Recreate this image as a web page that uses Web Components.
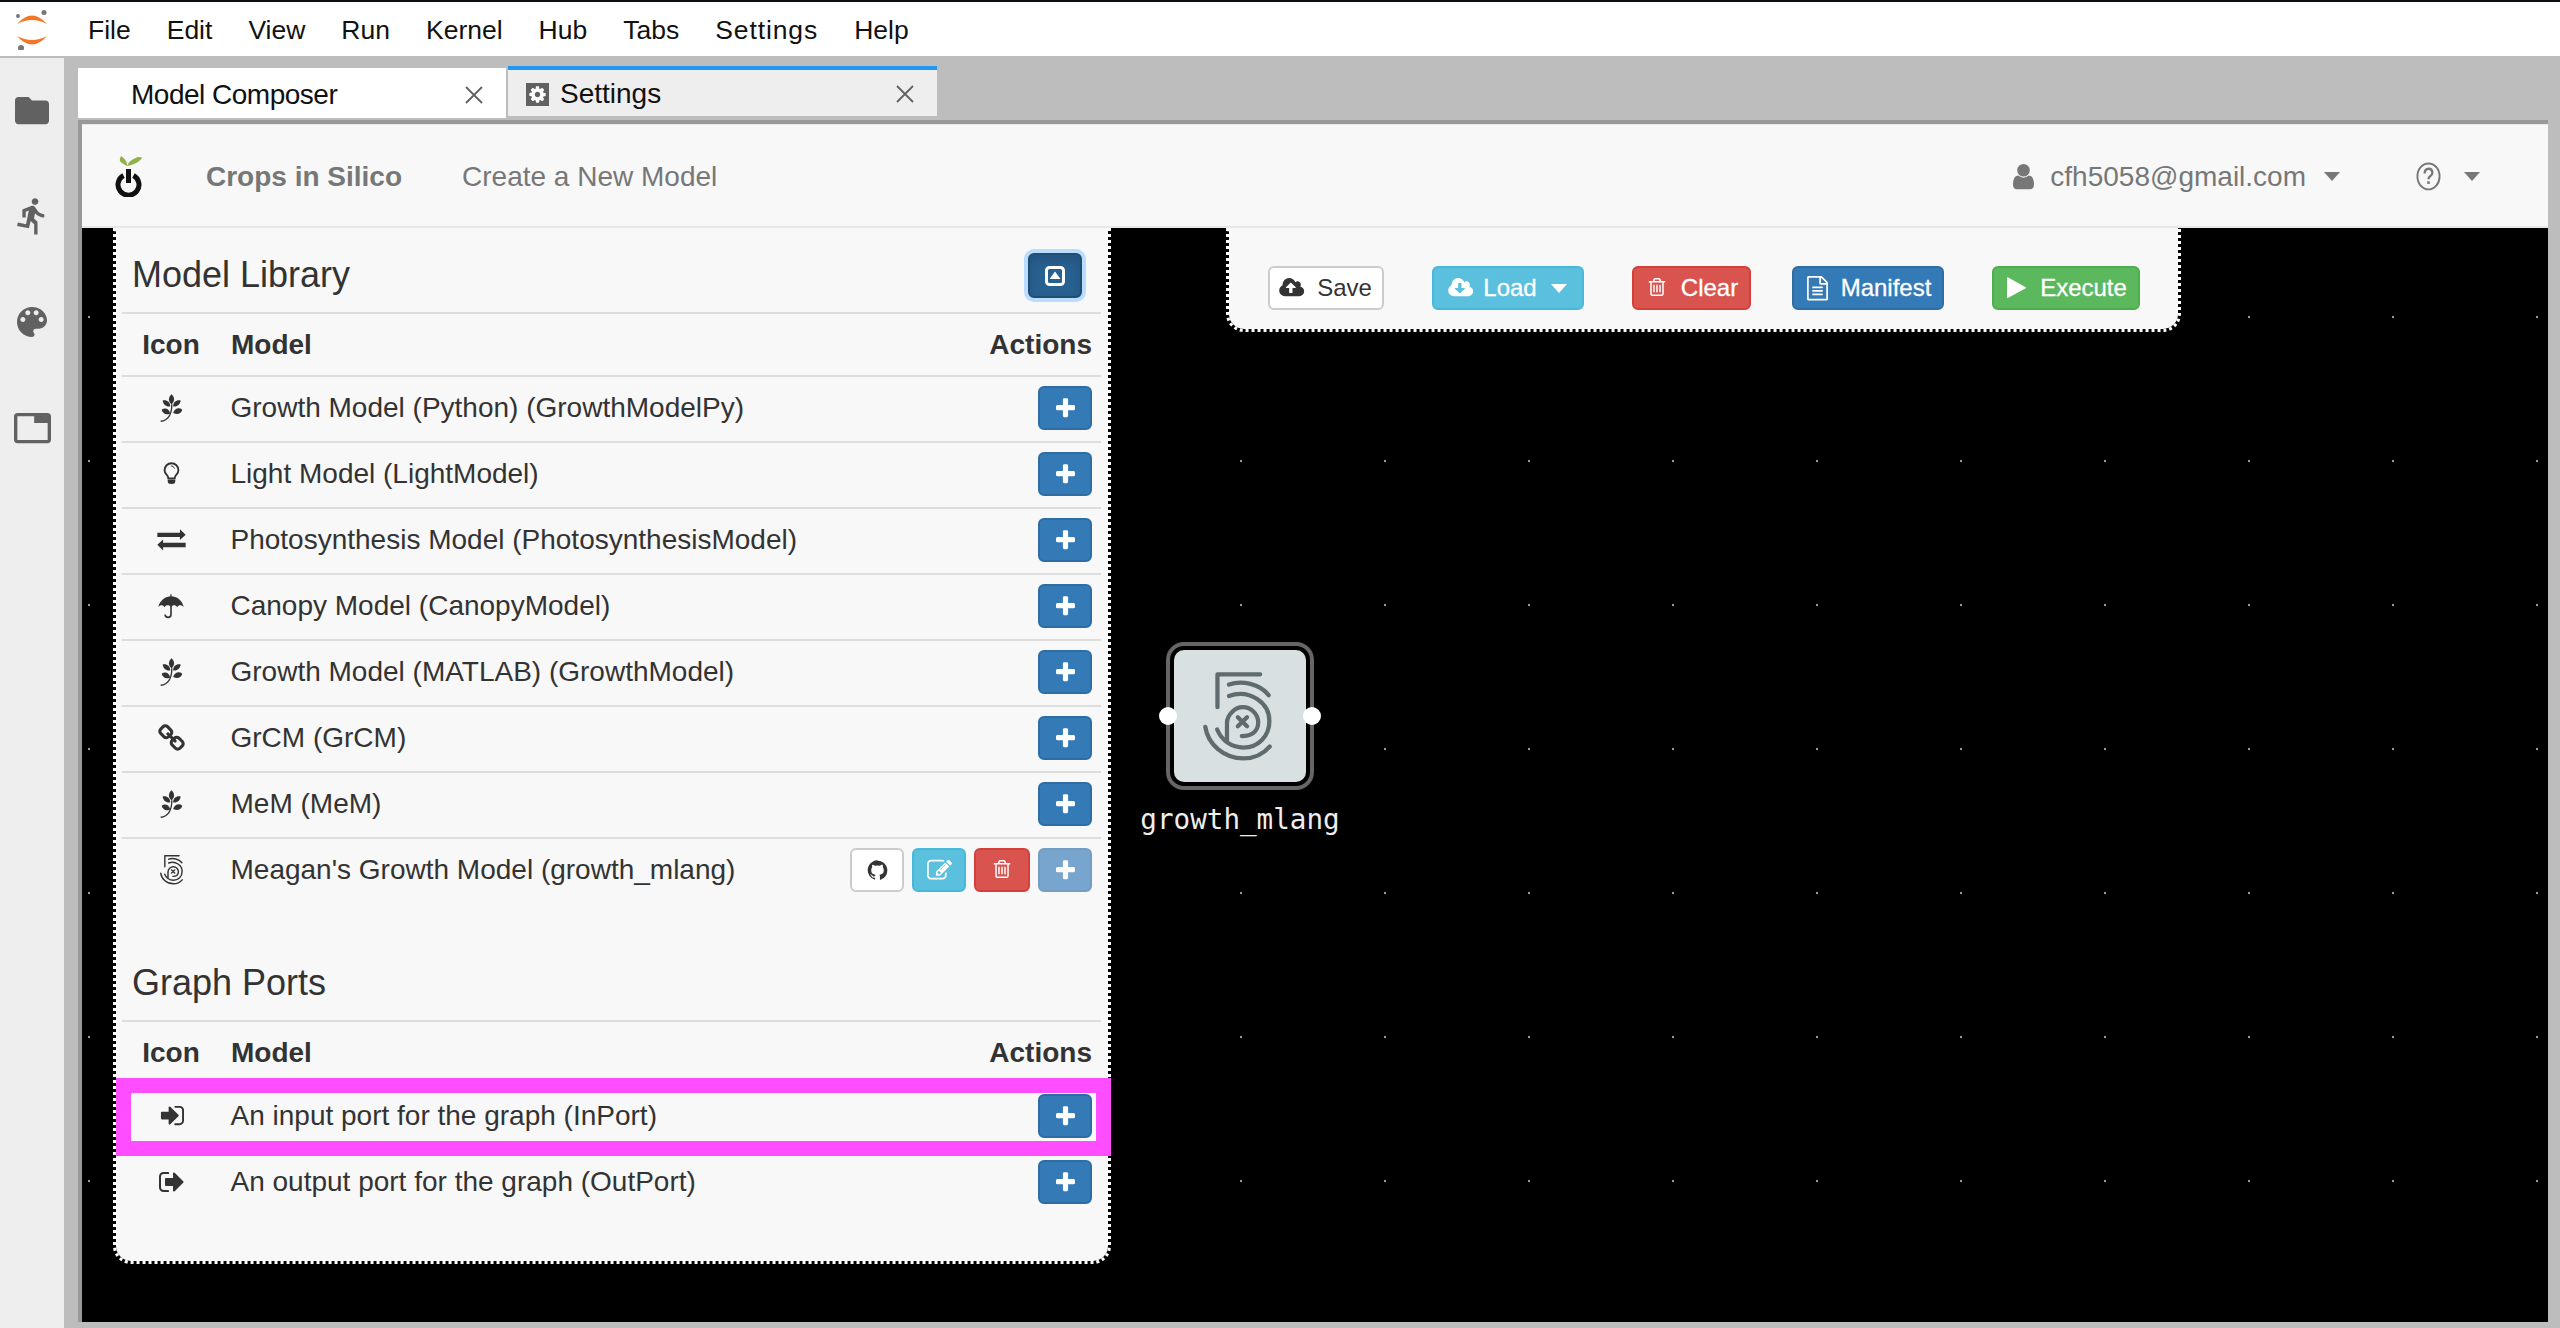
<!DOCTYPE html>
<html>
<head>
<meta charset="utf-8">
<title>Model Composer</title>
<style>
  html, body { margin: 0; height: 100%; overflow: hidden; }
  body { font-family: "Liberation Sans", Arial, sans-serif; color: #333; }
</style>
</head>
<body>
<jl-app>
  <jl-menubar slot="menu"></jl-menubar>
  <jl-sidebar slot="side"></jl-sidebar>
  <jl-tab slot="tabs" label="Model Composer" width="428" style="letter-spacing:-.5px"></jl-tab>
  <jl-tab slot="tabs" label="Settings" width="429" accent></jl-tab>

  <cis-navbar slot="doc"></cis-navbar>
  <cis-canvas slot="doc">
    <cis-panel style="left:31px;top:0;width:998px;height:1036px">
      <cis-section heading="Model Library">
        <cis-btn slot="head-action" kind="toggle" icon="caret-square" icon-size="20" style="width:54px"></cis-btn>
        <cis-row><x-icon slot="icon" name="grain" size="23"></x-icon>Growth Model (Python) (GrowthModelPy)<cis-btn slot="actions" kind="primary" icon="plus" icon-size="19"></cis-btn></cis-row>
        <cis-row><x-icon slot="icon" name="bulb" size="17"></x-icon>Light Model (LightModel)<cis-btn slot="actions" kind="primary" icon="plus" icon-size="19"></cis-btn></cis-row>
        <cis-row><x-icon slot="icon" name="exchange" size="29"></x-icon>Photosynthesis Model (PhotosynthesisModel)<cis-btn slot="actions" kind="primary" icon="plus" icon-size="19"></cis-btn></cis-row>
        <cis-row><x-icon slot="icon" name="umbrella" size="28"></x-icon>Canopy Model (CanopyModel)<cis-btn slot="actions" kind="primary" icon="plus" icon-size="19"></cis-btn></cis-row>
        <cis-row><x-icon slot="icon" name="grain" size="23"></x-icon>Growth Model (MATLAB) (GrowthModel)<cis-btn slot="actions" kind="primary" icon="plus" icon-size="19"></cis-btn></cis-row>
        <cis-row><x-icon slot="icon" name="link" size="27"></x-icon>GrCM (GrCM)<cis-btn slot="actions" kind="primary" icon="plus" icon-size="19"></cis-btn></cis-row>
        <cis-row><x-icon slot="icon" name="grain" size="23"></x-icon>MeM (MeM)<cis-btn slot="actions" kind="primary" icon="plus" icon-size="19"></cis-btn></cis-row>
        <cis-row><x-icon slot="icon" name="five" size="23"></x-icon>Meagan's Growth Model (growth_mlang)
          <cis-btn slot="actions" kind="default" icon="github" icon-size="23"></cis-btn>
          <cis-btn slot="actions" kind="info" icon="edit" icon-size="25"></cis-btn>
          <cis-btn slot="actions" kind="danger" icon="trash" icon-size="18" style="width:56px"></cis-btn>
          <cis-btn slot="actions" kind="primary" icon="plus" icon-size="19" faded></cis-btn>
        </cis-row>
      </cis-section>
      <cis-section heading="Graph Ports" style="margin-top:33px">
        <cis-row><x-icon slot="icon" name="sign-in" size="25"></x-icon>An input port for the graph (InPort)<cis-btn slot="actions" kind="primary" icon="plus" icon-size="19"></cis-btn></cis-row>
        <cis-row><x-icon slot="icon" name="sign-out" size="25"></x-icon>An output port for the graph (OutPort)<cis-btn slot="actions" kind="primary" icon="plus" icon-size="19"></cis-btn></cis-row>
      </cis-section>
      <cis-highlight style="left:0;top:850px;width:995px;height:78px"></cis-highlight>
    </cis-panel>

    <cis-panel toolbar style="left:1144px;top:0;width:955px;height:104px">
      <cis-btn kind="default" icon="cloud-up" icon-size="25" style="width:116px;gap:12px">Save</cis-btn>
      <cis-btn kind="info" icon="cloud-down" icon-size="25" caret style="width:152px;margin-left:48px;gap:9px">Load</cis-btn>
      <cis-btn kind="danger" icon="trash" icon-size="18" style="width:119px;margin-left:48px;gap:15px;padding-left:3px">Clear</cis-btn>
      <cis-btn kind="primary" icon="file" icon-size="21" style="width:152px;margin-left:41px;gap:13px;padding-left:2px">Manifest</cis-btn>
      <cis-btn kind="success" icon="play" icon-size="19" style="width:148px;margin-left:48px;gap:14px;padding-left:2px">Execute</cis-btn>
    </cis-panel>

    <cis-node label="growth_mlang" style="left:1084px;top:414px"></cis-node>
  </cis-canvas>
</jl-app>

<script>
const FA = '0 0 1792 1792';
const PLAY = 'M1576 927l-1328 738q-23 13-39.5 3t-16.5-36v-1472q0-26 16.5-36t39.5 3l1328 738q23 13 23 31t-23 31z';
const ICONS = {
  plus: { vb: '192 192 1408 1408', d: 'M1600 736v192q0 40-28 68t-68 28h-416v416q0 40-28 68t-68 28h-192q-40 0-68-28t-28-68v-416h-416q-40 0-68-28t-28-68v-192q0-40 28-68t68-28h416v-416q0-40 28-68t68-28h192q40 0 68 28t28 68v416h416q40 0 68 28t28 68z' },
  trash: { vb: '128 128 1536 1664', d: 'M704 736v576q0 14-9 23t-23 9h-64q-14 0-23-9t-9-23v-576q0-14 9-23t23-9h64q14 0 23 9t9 23zm256 0v576q0 14-9 23t-23 9h-64q-14 0-23-9t-9-23v-576q0-14 9-23t23-9h64q14 0 23 9t9 23zm256 0v576q0 14-9 23t-23 9h-64q-14 0-23-9t-9-23v-576q0-14 9-23t23-9h64q14 0 23 9t9 23zm128 724v-948h-896v948q0 22 7 40.5t14.5 27 10.5 8.5h832q3 0 10.5-8.5t14.5-27 7-40.5zm-672-1076h448l-48-117q-7-9-17-11h-317q-10 2-17 11zm928 32v64q0 14-9 23t-23 9h-96v948q0 83-47 143.5t-113 60.5h-832q-66 0-113-58.5t-47-141.5v-952h-96q-14 0-23-9t-9-23v-64q0-14 9-23t23-9h309l70-167q15-37 54-63t79-26h320q40 0 79 26t54 63l70 167h309q14 0 23 9t9 23z' },
  github: { vb: FA, d: 'M896 128q209 0 385.5 103t279.5 279.5 103 385.5q0 251-146.5 451.5t-378.5 277.5q-27 5-40-7t-13-30q0-3 .5-76.5t.5-134.5q0-97-52-142 57-6 102.5-18t94-39 81-66.5 53-105 20.5-150.5q0-119-79-206 37-91-8-204-28-9-81 11t-92 44l-38 24q-93-26-192-26t-192 26q-16-11-42.5-27t-83.5-38.5-85-13.5q-45 113-8 204-79 87-79 206 0 85 20.5 150t52.5 105 80.5 67 94 39 102.5 18q-39 36-49 103-21 10-45 15t-57 5-65.5-21.5-55.5-62.5q-19-32-48.5-52t-49.5-24l-20-3q-21 0-29 4.5t-5 11.5 9 14 13 12l7 5q22 10 43.5 38t31.5 51l10 23q13 38 44 63t67 32 72 8 59-3l21-4q0 30 .5 70t.5 43q0 18-13 30t-40 7q-232-77-378.5-277.5t-146.5-451.5q0-209 103-385.5t279.5-279.5 385.5-103z' },
  edit: { vb: FA, d: 'M888 1184l116-116-152-152-116 116v56h96v96h56zm440-720q-16-16-33 1l-350 350q-17 17-1 33t33-1l350-350q17-17 1-33zm80 594v190q0 119-84.5 203.5t-203.5 84.5h-832q-119 0-203.5-84.5t-84.5-203.5v-832q0-119 84.5-203.5t203.5-84.5h832q63 0 117 25 15 7 18 23 3 17-9 29l-49 49q-14 14-32 8-23-6-45-6h-832q-66 0-113 47t-47 113v832q0 66 47 113t113 47h832q66 0 113-47t47-113v-126q0-13 9-22l64-64q15-15 35-7t20 29zm-96-738l288 288-672 672h-288v-288zm444 132l-92 92-288-288 92-92q28-28 68-28t68 28l152 152q28 28 28 68t-28 68z' },
  'cloud-up': { vb: '0 128 1920 1536', d: 'M1216 864q0-14-9-23l-352-352q-9-9-23-9t-23 9l-351 351q-10 12-10 24 0 14 9 23t23 9h224v352q0 13 9.5 22.5t22.5 9.5h192q13 0 22.5-9.5t9.5-22.5v-352h224q13 0 22.5-9.5t9.5-22.5zm640 288q0 159-112.5 271.5t-271.5 112.5h-1088q-185 0-316.5-131.5t-131.5-316.5q0-130 70-240t188-165q-2-30-2-43 0-212 150-362t362-150q156 0 285.5 87t188.5 231q71-62 166-62 106 0 181 75t75 181q0 76-41 138 130 31 213.5 135.5t83.5 238.5z' },
  'cloud-down': { vb: '0 128 1920 1536', d: 'M1216 928q0-14-9-23t-23-9h-224v-352q0-13-9.5-22.5t-22.5-9.5h-192q-13 0-22.5 9.5t-9.5 22.5v352h-224q-14 0-23 9t-9 23q0 12 10 24l351 351q9 9 23 9t23-9l352-352q9-9 9-23zm640 224q0 159-112.5 271.5t-271.5 112.5h-1088q-185 0-316.5-131.5t-131.5-316.5q0-130 70-240t188-165q-2-30-2-43 0-212 150-362t362-150q156 0 285.5 87t188.5 231q71-62 166-62 106 0 181 75t75 181q0 76-41 138 130 31 213.5 135.5t83.5 238.5z' },
  file: { vb: '128 0 1536 1792', d: 'M1596 380q28 28 48 76t20 88v1152q0 40-28 68t-68 28h-1344q-40 0-68-28t-28-68v-1600q0-40 28-68t68-28h896q40 0 88 20t76 48zm-444-244v376h376q-10-29-22-41l-313-313q-12-12-41-22zm384 1528v-1024h-416q-40 0-68-28t-28-68v-416h-768v1536h1280zm-1024-864q0-14 9-23t23-9h704q14 0 23 9t9 23v64q0 14-9 23t-23 9h-704q-14 0-23-9t-9-23v-64zm736 224q14 0 23 9t9 23v64q0 14-9 23t-23 9h-704q-14 0-23-9t-9-23v-64q0-14 9-23t23-9h704zm0 256q14 0 23 9t9 23v64q0 14-9 23t-23 9h-704q-14 0-23-9t-9-23v-64q0-14 9-23t23-9h704z' },
  play: { vb: '190 100 1410 1600', d: PLAY },
  user: { vb: '256 128 1280 1536', d: 'M1536 1399q0 109-62.5 187t-150.5 78h-854q-88 0-150.5-78t-62.5-187q0-85 8.5-160.5t31.5-152 58.5-131 94-89 134.5-34.5q131 128 313 128t313-128q76 0 134.5 34.5t94 89 58.5 131 31.5 152 8.5 160.5zm-256-887q0 159-112.5 271.5t-271.5 112.5-271.5-112.5-112.5-271.5 112.5-271.5 271.5-112.5 271.5 112.5 112.5 271.5z' },
  gear: { vb: FA, d: 'M1152 896q0-106-75-181t-181-75-181 75-75 181 75 181 181 75 181-75 75-181zm512-109v222q0 12-8 23t-20 13l-185 28q-19 54-39 91 35 50 107 138 10 12 10 25t-9 23q-27 37-99 108t-94 71q-12 0-26-9l-138-108q-44 23-91 38-16 136-29 186-7 28-36 28h-222q-14 0-24.5-8.5t-11.5-21.5l-28-184q-49-16-90-37l-141 107q-10 9-25 9-14 0-25-11-126-114-165-168-7-10-7-23 0-12 8-23 15-21 51-66.5t54-70.5q-27-50-41-99l-183-27q-13-2-21-12.5t-8-23.5v-222q0-12 8-23t19-13l186-28q14-46 39-92-40-57-107-138-10-12-10-24 0-10 9-23 26-36 98.5-107.5t94.5-71.5q13 0 26 10l138 107q44-23 91-38 16-136 29-186 7-28 36-28h222q14 0 24.5 8.5t11.5 21.5l28 184q49 16 90 37l142-107q9-9 24-9 13 0 25 10 129 119 165 170 7 8 7 22 0 12-8 23-15 21-51 66.5t-54 70.5q26 50 41 98l183 28q13 2 21 12.5t8 23.5z' },
  'sign-in': { vb: '0 128 1664 1536', d: 'M1312 896q0 26-19 45l-544 544q-19 19-45 19t-45-19-19-45v-288h-448q-26 0-45-19t-19-45v-384q0-26 19-45t45-19h448v-288q0-26 19-45t45-19 45 19l544 544q19 19 19 45zm352-352v704q0 119-84.5 203.5t-203.5 84.5h-320q-13 0-22.5-9.5t-9.5-22.5q0-4-1-20t-.5-26.5 3-23.5 10-19.5 20.5-6.5h320q66 0 113-47t47-113v-704q0-66-47-113t-113-47h-288q-7 0-17.5-2t-13-3.5-10.5-6.5-7-10-4-14.5-2-19-1-21.5-.5-17q0-13 9.5-22.5t22.5-9.5h320q119 0 203.5 84.5t84.5 203.5z' },
  'sign-out': { vb: '64 128 1600 1536', d: 'M704 1440q0 4 1 20t.5 26.5-3 23.5-10 19.5-20.5 6.5h-320q-119 0-203.5-84.5t-84.5-203.5v-704q0-119 84.5-203.5t203.5-84.5h320q13 0 22.5 9.5t9.5 22.5q0 4 1 20t.5 26.5-3 23.5-10 19.5-20.5 6.5h-320q-66 0-113 47t-47 113v704q0 66 47 113t113 47h288q7 0 17.5 2t13 3.5 10.5 6.5 7 10 4 14.5 2 19 1 21.5.5 17zm928-544q0 26-19 45l-544 544q-19 19-45 19t-45-19-19-45v-288h-448q-26 0-45-19t-19-45v-384q0-26 19-45t45-19h448v-288q0-26 19-45t45-19 45 19l544 544q19 19 19 45z' },
  link: { vb: '64 64 1664 1664', d: 'M1520 1216q0-40-28-68l-208-208q-28-28-68-28-42 0-72 32 3 3 19 18.5t21.5 21.5 15 19 13 25.5 3.5 27.5q0 40-28 68t-68 28q-15 0-27.5-3.5t-25.5-13-19-15-21.5-21.5-18.5-19q-33 31-33 73 0 40 28 68l206 207q27 27 68 27 40 0 68-26l147-146q28-28 28-67zm-703-705q0-40-28-68l-206-207q-28-28-68-28-39 0-68 27l-147 146q-28 28-28 67 0 40 28 68l208 208q27 27 68 27 42 0 72-31-3-3-19-18.5t-21.5-21.5-15-19-13-25.5-3.5-27.5q0-40 28-68t68-28q15 0 27.5 3.5t25.5 13 19 15 21.5 21.5 18.5 19q33-31 33-73zm895 705q0 120-85 203l-147 146q-83 83-203 83-121 0-204-85l-206-207q-83-83-83-203 0-123 88-209l-88-88q-86 88-208 88-120 0-204-84l-208-208q-84-84-84-204t85-203l147-146q83-83 203-83 121 0 204 85l206 207q83 83 83 203 0 123-88 209l88 88q86-88 208-88 120 0 204 84l208 208q84 84 84 204z' },
  folder: { vb: '2 4 20 16', d: 'M10 4H4c-1.1 0-1.99.9-1.99 2L2 18c0 1.1.9 2 2 2h16c1.1 0 2-.9 2-2V8c0-1.1-.9-2-2-2h-8l-2-2z' },
  run: { vb: '4 1.4 16 22', d: 'M13.49 5.48c1.1 0 2-.9 2-2s-.9-2-2-2-2 .9-2 2 .9 2 2 2zm-3.6 13.9l1-4.4 2.1 2v6h2v-7.5l-2.1-2 .6-3c1.3 1.5 3.3 2.5 5.5 2.5v-2c-1.9 0-3.5-1-4.3-2.4l-1-1.6c-.4-.6-1-1-1.7-1-.3 0-.5.1-.8.1l-5.2 2.2v4.7h2v-3.4l1.8-.7-1.6 8.1-4.9-1-.4 2 7 1.4z' },
  palette: { vb: '3 3 18 18', d: 'M12 3c-4.97 0-9 4.03-9 9s4.03 9 9 9c.83 0 1.5-.67 1.5-1.5 0-.39-.15-.74-.39-1.01-.23-.26-.38-.61-.38-.99 0-.83.67-1.5 1.5-1.5H16c2.76 0 5-2.24 5-5 0-4.42-4.03-8-9-8zm-5.5 9c-.83 0-1.5-.67-1.5-1.5S5.67 9 6.5 9 8 9.67 8 10.5 7.33 12 6.5 12zm3-4C8.67 8 8 7.33 8 6.5S8.67 5 9.5 5s1.5.67 1.5 1.5S10.33 8 9.5 8zm5 0c-.83 0-1.5-.67-1.5-1.5S13.67 5 14.5 5s1.5.67 1.5 1.5S15.33 8 14.5 8zm3 4c-.83 0-1.5-.67-1.5-1.5S16.67 9 17.5 9s1.5.67 1.5 1.5-.67 1.5-1.5 1.5z' },
  tab: { vb: '1 3 22 18', d: 'M21 3H3c-1.1 0-2 .9-2 2v14c0 1.1.9 2 2 2h18c1.1 0 2-.9 2-2V5c0-1.1-.9-2-2-2zm0 16H3V5h10v4h8v10z' },
  exchange: { vb: '80 54 86 66', d: 'M81 65H148V55L165 71 148 87V78H81ZM165 95H98V85L81 101 98 118V108H165Z' },
  grain: { vb: '178 485 70 86', body: `
    <path d="M213 486C224 496 223 508 213 517 203 508 202 496 213 486Z"/>
    <path d="M186 505C198 502 209 509 209 523 197 525 188 518 186 505Z"/>
    <path d="M241 505C229 502 218 509 218 523 230 525 239 518 241 505Z"/>
    <path d="M183 533C194 525 206 531 209 544 197 550 187 546 183 533Z"/>
    <path d="M246 533C235 524 222 530 218 543 231 549 241 546 246 533Z"/>
    <path d="M180 568C196 566 214 555 214 516" fill="none" stroke="currentColor" stroke-width="4"/>` },
  bulb: { vb: '186 690 54 74', body: `
    <path d="M203 742C203 730 191 730 191 716a22 22 0 0 1 44 0C235 730 223 730 223 742Z" fill="none" stroke="currentColor" stroke-width="6"/>
    <path d="M201 746H225V752Q225 760 213 760 201 760 201 752Z"/>
    <path d="M211 702q8 0 12 9" fill="none" stroke="currentColor" stroke-width="3"/>` },
  umbrella: { vb: '80 240 86 82', body: `
    <path d="M84 284C88 262 108 250 123 250 140 250 158 262 162 284 155 276 147 276 142 284 137 276 128 276 123 284 118 276 108 276 103 284 98 276 90 276 84 284Z"/>
    <rect x="121" y="244" width="4" height="8"/>
    <path d="M123 280V306a9 9 0 0 1-18 0" fill="none" stroke="currentColor" stroke-width="5"/>` },
  five: { vb: '247 155 210 270', body: `
    <g fill="none" stroke="currentColor" stroke-width="13" stroke-linecap="round" stroke-linejoin="round">
    <path d="M421 162H291V262"/>
    <path d="M326 193C365 180 420 190 447 226"/>
    <path d="M326 228C390 205 450 250 449 305 449 350 415 385 370 385 335 385 305 365 290 330"/>
    <path d="M254 322C262 375 310 418 370 418 400 418 430 405 450 382"/>
    <path d="M320 362V310C320 285 345 262 368 262 395 262 415 285 415 308 415 335 395 350 365 350"/>
    <path d="M353 293L381 320M381 293L353 320"/></g>` },
  'caret-square': { vb: '0 0 20 20', body: `
    <rect x="1.5" y="1.5" width="17" height="17" rx="3" fill="none" stroke="currentColor" stroke-width="3"/>
    <path d="M10 5.5L15.5 13H4.5Z"/>` },
  help: { vb: '0 0 26 30', body: `
    <ellipse cx="13" cy="15" rx="11.5" ry="13.5" fill="none" stroke="currentColor" stroke-width="2"/>
    <path d="M9 12q0-5 4-5t4 4.500q0 2-2.500 3.500-1.500 1-1.500 3" fill="none" stroke="currentColor" stroke-width="2.400"/>
    <rect x="11.700" y="20" width="2.600" height="2.800"/>` }
};

class XIcon extends HTMLElement {
  connectedCallback() {
    const icon = ICONS[this.getAttribute('name')];
    const size = this.getAttribute('size') || 24;
    const [, , w, h] = icon.vb.split(' ').map(Number);
    const inner = icon.body || `<path d="${icon.d}"/>`;
    this.attachShadow({ mode: 'open' }).innerHTML = `
      <style>
        :host { display: inline-flex; align-items: center; justify-content: center; flex: none; }
        svg { display: block; fill: currentColor; overflow: visible; }
      </style>
      <svg xmlns="http://www.w3.org/2000/svg" viewBox="${icon.vb}" width="${size}" height="${size * h / w}">${inner}</svg>`;
  }
}

class JlApp extends HTMLElement {
  constructor() {
    super();
    this.attachShadow({ mode: 'open' }).innerHTML = `
      <style>
        :host { display: flex; flex-direction: column; height: 1328px; background: #bdbdbd; }
        .body { flex: 1; display: flex; min-height: 0; padding-top: 2px; }
        .main { flex: 1; display: flex; flex-direction: column; min-width: 0; padding: 0 12px 6px 14px; }
        .tabs { display: flex; align-items: flex-start; height: 62px; gap: 2px; padding-top: 10px; box-sizing: border-box; }
        .doc { flex: 1; display: flex; flex-direction: column; min-height: 0; border-top: 4px solid #999; border-left: 4px solid #999; }
      </style>
      <slot name="menu"></slot>
      <div class="body">
        <slot name="side"></slot>
        <div class="main">
          <div class="tabs"><slot name="tabs"></slot></div>
          <div class="doc"><slot name="doc"></slot></div>
        </div>
      </div>`;
  }
}

class JlMenubar extends HTMLElement {
  constructor() {
    super();
    const items = ['File', 'Edit', 'View', 'Run', 'Kernel', 'Hub', 'Tabs', 'Settings', 'Help'];
    this.attachShadow({ mode: 'open' }).innerHTML = `
      <style>
        :host { display: flex; align-items: center; height: 56px; box-sizing: border-box; background: #fff;
                border-top: 2px solid #0b1014; padding-top: 3px; color: #111; font-size: 26.500px; gap: 36px; }
        svg { display: block; margin: -3px 2px 0 14px; }
        span { display: block; }
        span:nth-of-type(8) { letter-spacing: .9px; }
      </style>
      <svg width="36" height="42" viewBox="14 8 36 42">
        <path d="M17 24Q32 7 47 24 32 16 17 24Z" fill="#f37726"/>
        <path d="M17 36Q32 53 47 36 32 44 17 36Z" fill="#f37726"/>
        <circle cx="18" cy="16" r="2" fill="#767677"/>
        <circle cx="44" cy="12.500" r="2.500" fill="#767677"/>
        <circle cx="21" cy="48" r="3" fill="#767677"/>
      </svg>
      ${items.map(t => `<span>${t}</span>`).join('')}`;
  }
}

class JlSidebar extends HTMLElement {
  constructor() {
    super();
    this.attachShadow({ mode: 'open' }).innerHTML = `
      <style>
        :host { display: flex; flex-direction: column; align-items: center; width: 64px; flex: none;
                background: #eee; color: #616161; padding-top: 39px; box-sizing: border-box; }
        x-icon:nth-of-type(1) { margin-bottom: 74px; }
        x-icon:nth-of-type(2) { margin-bottom: 72px; }
        x-icon:nth-of-type(3) { margin-bottom: 76px; }
      </style>
      <x-icon name="folder" size="34"></x-icon>
      <x-icon name="run" size="27"></x-icon>
      <x-icon name="palette" size="30"></x-icon>
      <x-icon name="tab" size="37"></x-icon>`;
  }
}

class JlTab extends HTMLElement {
  connectedCallback() {
    const accent = this.hasAttribute('accent');
    this.attachShadow({ mode: 'open' }).innerHTML = `
      <style>
        :host { display: flex; align-items: center; box-sizing: border-box; height: 50px; flex: none;
                width: ${this.getAttribute('width')}px; font-size: 28px; color: #111;
                background: ${accent ? '#eee' : '#fff'};
                ${accent ? 'margin-top:-2px;border-top:4px solid #2196f3;padding:2px 23px 0 18px;' : 'padding:3px 23px 0 53px;'} }
        .ico { width: 23px; height: 23px; background: #616161; color: #fff; display: flex; align-items: center;
               justify-content: center; margin-right: 11px; }
        .label { flex: 1; }
        svg { display: block; }
      </style>
      ${accent ? '<div class="ico"><x-icon name="gear" size="19"></x-icon></div>' : ''}
      <div class="label">${this.getAttribute('label')}</div>
      <svg width="18" height="18" viewBox="0 0 18 18"><path d="M1 1L17 17M17 1L1 17" stroke="#616161" stroke-width="1.800" fill="none"/></svg>`;
  }
}

class CisNavbar extends HTMLElement {
  constructor() {
    super();
    this.attachShadow({ mode: 'open' }).innerHTML = `
      <style>
        :host { display: flex; align-items: center; height: 104px; box-sizing: border-box; flex: none;
                background: #f8f8f8; border-top: 1px solid #e7e7e7; border-bottom: 2px solid #e7e7e7;
                color: #777; font-size: 28px; padding: 2px 68px 0 0; }
        svg.logo { display: block; margin: -2px 62px 0 32px; }
        b { margin-right: 60px; }
        .grow { flex: 1; }
        x-icon { color: #777; }
        .caret { width: 0; height: 0; border: 8px solid transparent; border-top: 9px solid #777; border-bottom: 0; }
        .mail { margin: 0 18px 0 16px; }
        .help { margin: 0 23px 0 76px; }
      </style>
      <svg class="logo" width="30" height="42" viewBox="0 0 30 42">
        <path d="M13 22V10Q13 5 7 1 4 6 8 8 11 10 13 11 15 5 24 2 28 2 28 3 24 9 13 11" fill="#8fb04a"/>
        <path d="M9.500 20.500a10.500 10.500 0 1 0 10 0" fill="none" stroke="#111" stroke-width="5"/>
        <path d="M14.500 14V28" stroke="#111" stroke-width="5"/>
      </svg>
      <b>Crops in Silico</b>
      <span>Create a New Model</span>
      <div class="grow"></div>
      <x-icon name="user" size="21"></x-icon>
      <span class="mail">cfh5058@gmail.com</span>
      <div class="caret"></div>
      <x-icon class="help" name="help" size="25"></x-icon>
      <div class="caret"></div>`;
  }
}

class CisCanvas extends HTMLElement {
  constructor() {
    super();
    this.attachShadow({ mode: 'open' }).innerHTML = `
      <style>
        :host { display: block; position: relative; flex: 1; min-height: 0; overflow: hidden; background-color: #000;
                background-image: radial-gradient(circle at center, #999 0, #999 1px, transparent 1.500px);
                background-size: 144px 144px; background-position: -65px 17px; }
      </style>
      <slot></slot>`;
  }
}

class CisPanel extends HTMLElement {
  connectedCallback() {
    const toolbar = this.hasAttribute('toolbar');
    this.attachShadow({ mode: 'open' }).innerHTML = `
      <style>
        :host { display: block; position: absolute; box-sizing: border-box; background: #f8f8f8;
                background-clip: padding-box; border: 3px dotted #fff; border-top: 0;
                border-radius: 0 0 18px 18px; padding: 0 7px 0 6px;
                ${toolbar ? 'display:flex;align-items:flex-start;padding:38px 0 0 39px;' : ''} }
      </style>
      <slot></slot>`;
  }
}

class CisSection extends HTMLElement {
  connectedCallback() {
    this.attachShadow({ mode: 'open' }).innerHTML = `
      <style>
        :host { display: block; }
        .title { display: flex; justify-content: space-between; align-items: flex-start; height: 84px;
                 box-sizing: border-box; padding: 25px 19px 0 10px; font-size: 36px; line-height: 40px; }
        .title span { margin-top: 2px; }
        .head { display: grid; grid-template-columns: 98px 1fr auto; align-items: center; height: 63px; box-sizing: border-box;
                border-top: 2px solid #ddd; padding-right: 9px; font-size: 28px; font-weight: bold; }
        .head div:first-child { text-align: center; }
        .head div:nth-child(2) { padding-left: 11px; }
      </style>
      <div class="title"><span>${this.getAttribute('heading')}</span><slot name="head-action"></slot></div>
      <div class="head"><div>Icon</div><div>Model</div><div>Actions</div></div>
      <slot></slot>`;
  }
}

class CisRow extends HTMLElement {
  constructor() {
    super();
    this.attachShadow({ mode: 'open' }).innerHTML = `
      <style>
        :host { display: grid; grid-template-columns: 98px 1fr auto; align-items: center; height: 66px; box-sizing: border-box;
                border-top: 2px solid #ddd; padding: 0 9px 2px 0; font-size: 28px; color: #333; }
        .icon { display: flex; justify-content: center; }
        .label { padding-left: 10.500px; }
        .actions { display: flex; gap: 8px; }
      </style>
      <div class="icon"><slot name="icon"></slot></div>
      <div class="label"><slot></slot></div>
      <div class="actions"><slot name="actions"></slot></div>`;
  }
}

const BTN = {
  default: ['#fff', '#ccc', '#333'],
  primary: ['#337ab7', '#2e6da4', '#fff'],
  info: ['#5bc0de', '#46b8da', '#fff'],
  danger: ['#d9534f', '#d43f3a', '#fff'],
  success: ['#5cb85c', '#4cae4c', '#fff'],
  toggle: ['#286090', '#204d74', '#fff']
};

class CisBtn extends HTMLElement {
  connectedCallback() {
    const kind = this.getAttribute('kind');
    const [bg, border, fg] = BTN[kind];
    const caret = this.hasAttribute('caret') ? '<i class="caret"></i>' : '';
    this.attachShadow({ mode: 'open' }).innerHTML = `
      <style>
        :host { display: inline-flex; align-items: center; justify-content: center; gap: 10px; box-sizing: border-box;
                width: 54px; height: 44px; flex: none; background: ${bg}; color: ${fg}; border: 2px solid ${border};
                border-radius: 6px; font-size: 24px;
                ${kind === 'default' ? '' : '-webkit-text-stroke: .3px currentColor;'}
                ${this.hasAttribute('faded') ? 'opacity:.65;' : ''}
                ${kind === 'toggle' ? 'height:45px;box-shadow:0 0 0 4px #b9dcff, inset 0 6px 10px rgba(0,0,0,.13);' : ''} }
        .caret { width: 0; height: 0; border: 8px solid transparent; border-top: 9px solid currentColor; border-bottom: 0; margin-left: 5px; }
      </style>
      <x-icon name="${this.getAttribute('icon')}" size="${this.getAttribute('icon-size')}"></x-icon>
      <slot></slot>${caret}`;
  }
}

// the pink frame drawn on top of the InPort row
class CisHighlight extends HTMLElement {
  constructor() {
    super();
    this.attachShadow({ mode: 'open' }).innerHTML = `
      <style>:host { display: block; position: absolute; box-sizing: border-box; border: 15px solid #ff4dff; pointer-events: none; }</style>`;
  }
}

class CisNode extends HTMLElement {
  connectedCallback() {
    this.attachShadow({ mode: 'open' }).innerHTML = `
      <style>
        :host { display: block; position: absolute; width: 148px; color: #eee; }
        .box { position: relative; box-sizing: border-box; width: 148px; height: 148px; padding: 4px;
               border: 4px solid #666; border-radius: 18px; background: #000; }
        .inner { width: 100%; height: 100%; background: #d9e0e2; border-radius: 10px; color: #5f6b6e;
                 display: flex; align-items: center; justify-content: center; }
        .inner x-icon { margin: 1px 6px 0 0; }
        .port { position: absolute; top: 61px; width: 18px; height: 18px; border-radius: 50%; background: #fff; }
        .in { left: -11px; } .out { right: -11px; }
        .label { position: absolute; left: -30px; right: -30px; top: 160px; text-align: center; white-space: nowrap;
                 font: 27.600px/36px "DejaVu Sans Mono", monospace; }
      </style>
      <div class="box">
        <div class="inner"><x-icon name="five" size="69"></x-icon></div>
        <div class="port in"></div><div class="port out"></div>
      </div>
      <div class="label">${this.getAttribute('label')}</div>`;
  }
}

customElements.define('x-icon', XIcon);
customElements.define('jl-app', JlApp);
customElements.define('jl-menubar', JlMenubar);
customElements.define('jl-sidebar', JlSidebar);
customElements.define('jl-tab', JlTab);
customElements.define('cis-navbar', CisNavbar);
customElements.define('cis-canvas', CisCanvas);
customElements.define('cis-panel', CisPanel);
customElements.define('cis-section', CisSection);
customElements.define('cis-row', CisRow);
customElements.define('cis-btn', CisBtn);
customElements.define('cis-highlight', CisHighlight);
customElements.define('cis-node', CisNode);
</script>
</body>
</html>
